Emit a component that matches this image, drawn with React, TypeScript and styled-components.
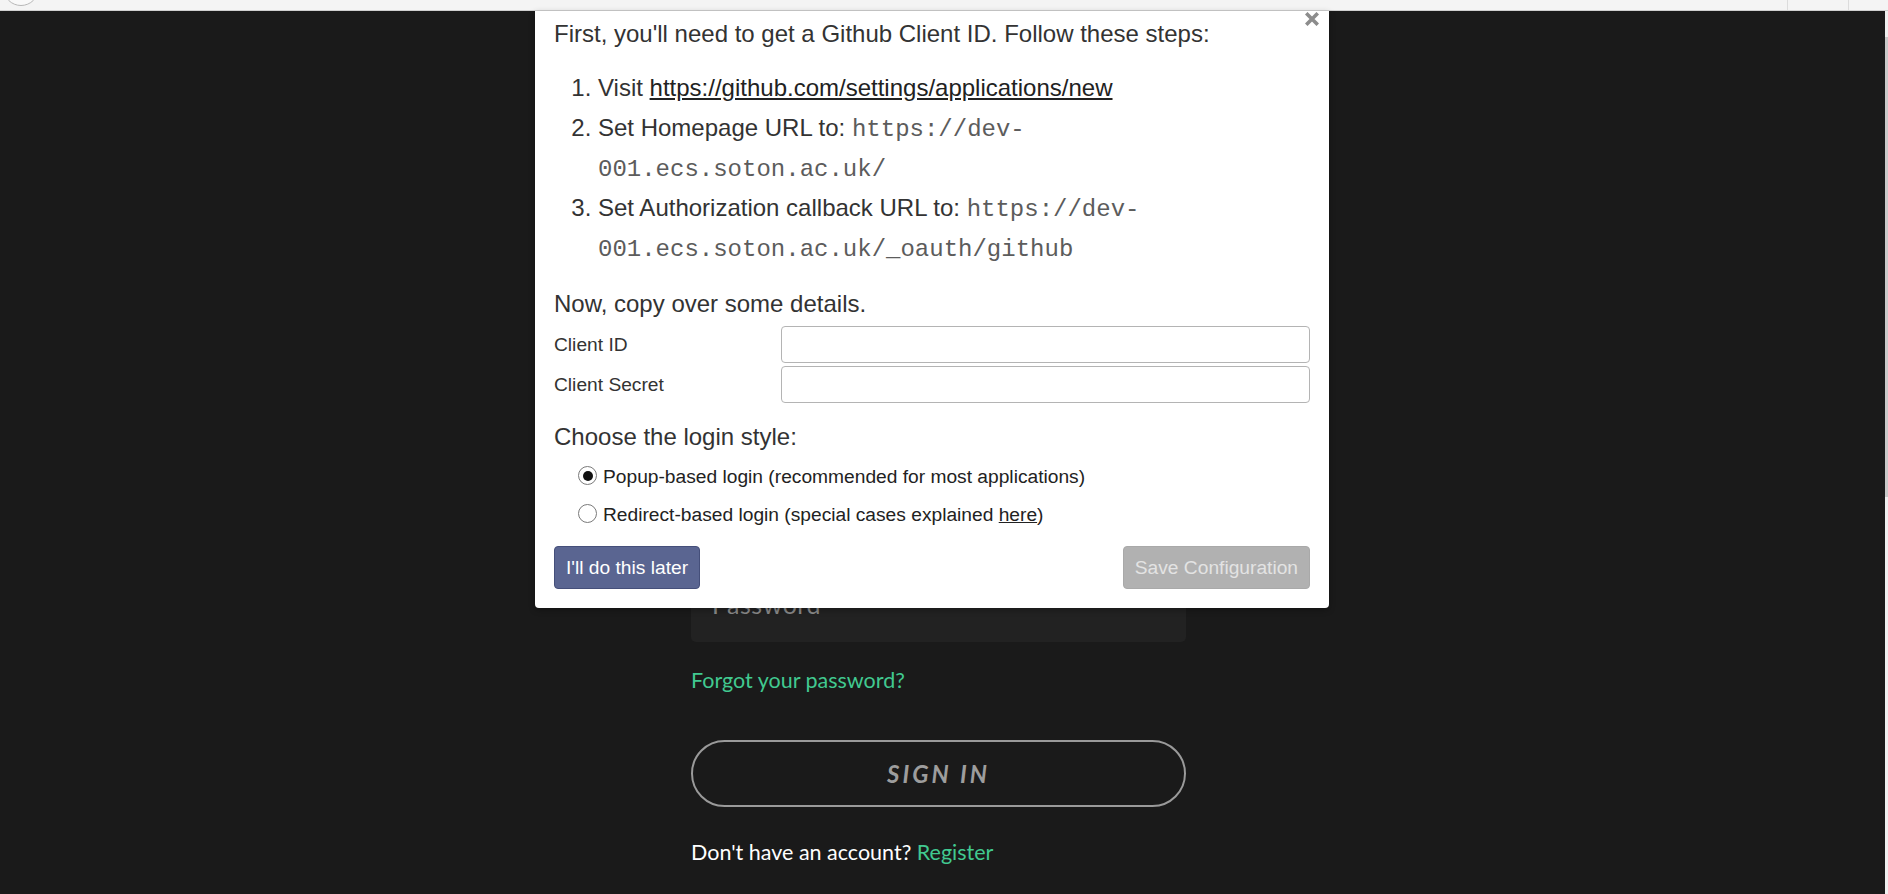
import React, { useState } from "react";
import styled, { createGlobalStyle } from "styled-components";

const GlobalStyle = createGlobalStyle`
  html, body {
    margin: 0;
    padding: 0;
    height: 100%;
    overflow: hidden;
  }
  body {
    background: #1a1a1a;
  }
`;

const Page = styled.div`
  position: relative;
  height: 894px;
  display: flex;
  flex-direction: column;
  background: #1a1a1a;
  overflow: hidden;
`;

const TopStrip = styled.div`
  height: 10px;
  flex: 0 0 10px;
  background: #f4f4f4;
  border-bottom: 1px solid #cfcfcf;
  display: flex;
  justify-content: flex-end;
  position: relative;
  overflow: hidden;
`;

const StripCircle = styled.div`
  position: absolute;
  left: 3px;
  top: -30px;
  width: 34px;
  height: 34px;
  border-radius: 50%;
  border: 1px solid #b8b8b8;
  background: #f9f9f9;
`;

const StripDivider = styled.div<{ $right: number }>`
  width: 1px;
  background: #dcdcdc;
  margin-right: ${(p) => p.$right}px;
`;

const Body = styled.div`
  flex: 1;
  display: flex;
`;

const Main = styled.div`
  flex: 1;
  display: flex;
  justify-content: center;
  padding-top: 567px;
`;

const Scrollbar = styled.div`
  width: 3px;
  background: #efefef;
  display: flex;
  flex-direction: column;
  padding-top: 26px;
`;

const ScrollThumb = styled.div`
  height: 460px;
  background: #c9c9c9;
`;

/* login form under the overlay */
const LoginForm = styled.form`
  width: 495px;
  display: flex;
  flex-direction: column;
  font-family: Lato, "Open Sans", sans-serif;
  margin-left: -8px;
`;

const PasswordInput = styled.div`
  height: 64px;
  box-sizing: border-box;
  border-radius: 5px;
  background: #222222;
  display: flex;
  align-items: center;
  padding: 0 0 12px 21px;
  font-size: 25px;
  color: #8a8a8a;
  letter-spacing: 0.5px;
`;

const GreenLink = styled.a`
  color: #41c990;
  text-decoration: none;
`;

const Forgot = styled.div`
  margin-top: 26px;
  font-size: 21.5px;
  line-height: 24px;
`;

const SignInButton = styled.button`
  margin-top: 48px;
  height: 67px;
  border: 2px solid #9a9a9a;
  border-radius: 34px;
  background: transparent;
  color: #9d9d9d;
  font-family: Lato, "Open Sans", sans-serif;
  font-style: italic;
  font-weight: 700;
  font-size: 24px;
  letter-spacing: 3px;
  cursor: pointer;
`;

const RegisterLine = styled.div`
  margin-top: 33px;
  color: #ffffff;
  font-size: 21.5px;
  line-height: 24px;
`;

/* modal overlay */
const Modal = styled.div`
  position: absolute;
  top: 11px;
  left: 535px;
  width: 794px;
  box-sizing: border-box;
  padding: 9px 19px 19px;
  background: #ffffff;
  border-radius: 0 0 4px 4px;
  color: #333333;
  font-family: "Liberation Sans", Arial, sans-serif;
  box-shadow: 0 2px 6px rgba(0, 0, 0, 0.3);
`;

const CloseButton = styled.button`
  position: absolute;
  top: -1px;
  right: 8px;
  width: 18px;
  height: 18px;
  padding: 0;
  border: none;
  background: transparent;
  display: flex;
  align-items: center;
  justify-content: center;
  cursor: pointer;
`;

const Heading = styled.div`
  font-size: 24px;
  line-height: 28px;
`;

const Steps = styled.ol`
  margin: 20px 0 0;
  padding-left: 44px;
  font-size: 24px;
  line-height: 40px;
`;

const Step = styled.li`
  padding-left: 0;
`;

const StepLink = styled.a`
  color: #222222;
  text-decoration: underline;
`;

const Code = styled.code`
  font-family: "Liberation Mono", "Courier New", monospace;
  font-size: 24px;
  line-height: 1;
  color: #5c5c5c;
`;

const SubHeading = styled.div<{ $top: number }>`
  margin-top: ${(p) => p.$top}px;
  font-size: 24px;
  line-height: 28px;
`;

const Fields = styled.div`
  margin-top: 8px;
  display: grid;
  grid-template-columns: 227px 1fr;
  row-gap: 3px;
  align-items: center;
`;

const FieldLabel = styled.label`
  font-size: 19.2px;
`;

const TextInput = styled.input`
  height: 37px;
  box-sizing: border-box;
  border: 1px solid #b4b4b4;
  border-radius: 4px;
  padding: 4px 8px;
  font-size: 18px;
  outline: none;
`;

const RadioList = styled.div`
  margin-top: 7px;
  display: flex;
  flex-direction: column;
`;

const RadioRow = styled.label`
  height: 38px;
  display: flex;
  align-items: center;
  padding-left: 24px;
  font-size: 19.2px;
  color: #222222;
`;

const Radio = styled.input`
  appearance: none;
  margin: -3px 6px 0 0;
  width: 19px;
  height: 19px;
  border: 1px solid #7a7a7a;
  border-radius: 50%;
  background: #ffffff;
  display: grid;
  place-items: center;

  &:checked::after {
    content: "";
    width: 10px;
    height: 10px;
    border-radius: 50%;
    background: #111111;
  }
`;

const InlineLink = styled.a`
  color: #222222;
  text-decoration: underline;
`;

const Actions = styled.div`
  margin-top: 12px;
  display: flex;
  justify-content: space-between;
`;

const ActionButton = styled.button<{ $variant: "primary" | "disabled" }>`
  height: 43px;
  padding: 0 11px;
  border-radius: 4px;
  font-family: "Liberation Sans", Arial, sans-serif;
  font-size: 19.2px;
  border: 1px solid ${(p) => (p.$variant === "primary" ? "#454f7a" : "#a9a9a9")};
  background: ${(p) => (p.$variant === "primary" ? "#5a6591" : "#b1b1b1")};
  color: ${(p) => (p.$variant === "primary" ? "#ffffff" : "#e3e3e3")};
  cursor: ${(p) => (p.$variant === "primary" ? "pointer" : "default")};
`;

const App = () => {
  const [style, setStyle] = useState("popup");

  return (
    <Page>
      <GlobalStyle />
      <TopStrip>
        <StripCircle />
        <StripDivider $right={60} />
        <StripDivider $right={39} />
      </TopStrip>
      <Body>
        <Main>
          <LoginForm onSubmit={(e) => e.preventDefault()}>
            <PasswordInput>Password</PasswordInput>
            <Forgot>
              <GreenLink href="#">Forgot your password?</GreenLink>
            </Forgot>
            <SignInButton type="submit">SIGN IN</SignInButton>
            <RegisterLine>
              Don't have an account? <GreenLink href="#">Register</GreenLink>
            </RegisterLine>
          </LoginForm>
        </Main>
        <Scrollbar>
          <ScrollThumb />
        </Scrollbar>
      </Body>

      <Modal>
        <CloseButton aria-label="close">
          <svg width="14" height="14" viewBox="0 0 14 14">
            <path d="M2.5 2.5 L11.5 11.5 M11.5 2.5 L2.5 11.5" stroke="#8c8c8c" strokeWidth="3.6" strokeLinecap="square" />
          </svg>
        </CloseButton>
        <Heading>First, you'll need to get a Github Client ID. Follow these steps:</Heading>
        <Steps>
          <Step>
            Visit <StepLink href="#">https://github.com/settings/applications/new</StepLink>
          </Step>
          <Step>
            Set Homepage URL to: <Code>https://dev-001.ecs.soton.ac.uk/</Code>
          </Step>
          <Step>
            Set Authorization callback URL to: <Code>https://dev-001.ecs.soton.ac.uk/_oauth/github</Code>
          </Step>
        </Steps>

        <SubHeading $top={22}>Now, copy over some details.</SubHeading>
        <Fields>
          <FieldLabel>Client ID</FieldLabel>
          <TextInput type="text" />
          <FieldLabel>Client Secret</FieldLabel>
          <TextInput type="text" />
        </Fields>

        <SubHeading $top={20}>Choose the login style:</SubHeading>
        <RadioList>
          <RadioRow>
            <Radio type="radio" name="loginStyle" checked={style === "popup"} onChange={() => setStyle("popup")} />
            Popup-based login (recommended for most applications)
          </RadioRow>
          <RadioRow>
            <Radio type="radio" name="loginStyle" checked={style === "redirect"} onChange={() => setStyle("redirect")} />
            <span>
              Redirect-based login (special cases explained <InlineLink href="#">here</InlineLink>)
            </span>
          </RadioRow>
        </RadioList>

        <Actions>
          <ActionButton $variant="primary">I'll do this later</ActionButton>
          <ActionButton $variant="disabled" disabled>
            Save Configuration
          </ActionButton>
        </Actions>
      </Modal>
    </Page>
  );
};

export default App;
